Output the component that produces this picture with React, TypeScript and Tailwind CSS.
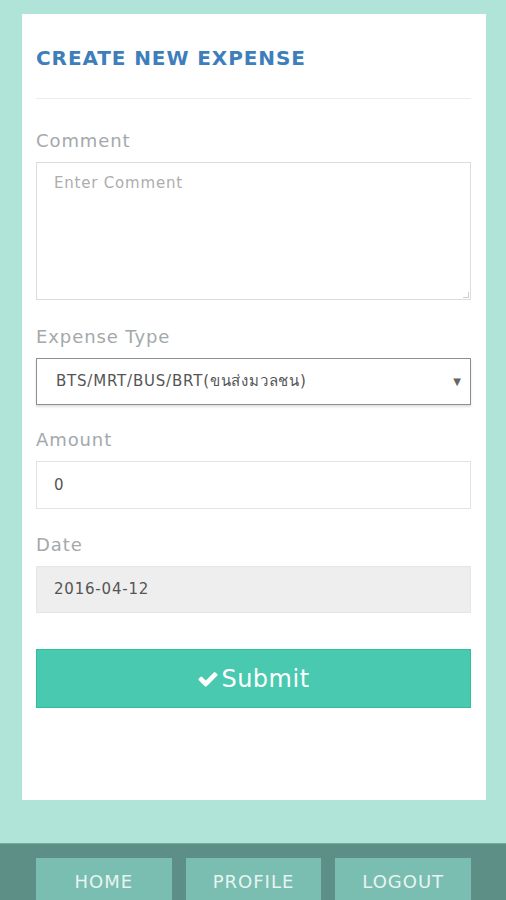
import React from 'react';

const font = { fontFamily: '"DejaVu Sans", "Noto Sans", sans-serif' };

function Label({ children }: { children: React.ReactNode }) {
  return <div className="text-[18px] leading-[24px] text-[#a3a9ab] tracking-[0.9px]">{children}</div>;
}

export default function App() {
  return (
    <div className="h-[900px] overflow-hidden bg-[#b1e4d9] flex flex-col" style={font}>
      {/* Card */}
      <div className="shrink-0 ml-[22px] mr-[20px] mt-[14px] h-[786px] bg-white pl-[14px] pr-[15px] pt-[32px] flex flex-col">
        <h1 className="text-[20px] leading-[24px] font-bold text-[#3d7ebb] tracking-[0.9px]">CREATE NEW EXPENSE</h1>
        <div className="mt-[28px] h-px bg-[#ececec]" />

        <div className="mt-[30px]">
          <Label>Comment</Label>
        </div>
        <div className="mt-[9px] h-[138px] border border-[#dcdcdc] px-[17px] pt-[8px] relative">
          <span className="text-[15px] text-[#adadad] tracking-[0.8px]">Enter Comment</span>
          <span className="absolute right-[1px] bottom-[1px] w-[6px] h-[6px] border-b border-r border-[#cfcfcf]" />
        </div>

        <div className="mt-[25px]">
          <Label>Expense Type</Label>
        </div>
        <div className="mt-[9px] h-[47px] border border-[#8e8e8e] shadow-[0_2px_2px_rgba(0,0,0,0.12)] flex items-center pl-[19px] pr-[9px]">
          <span className="flex-1 text-[15px] text-[#555] tracking-[0.8px]">BTS/MRT/BUS/BRT(ขนส่งมวลชน)</span>
          <span className="text-[10px] text-[#666]">▼</span>
        </div>

        <div className="mt-[23px]">
          <Label>Amount</Label>
        </div>
        <div className="mt-[9px] h-[48px] border border-[#e3e3e3] flex items-center px-[17px]">
          <span className="text-[15px] text-[#555]">0</span>
        </div>

        <div className="mt-[24px]">
          <Label>Date</Label>
        </div>
        <div className="mt-[9px] h-[47px] bg-[#eeeeee] border border-[#e6e6e6] flex items-center px-[17px]">
          <span className="text-[15px] text-[#555] tracking-[0.8px]">2016-04-12</span>
        </div>

        <button className="mt-[36px] h-[59px] bg-[#48c9b0] border border-[#2fbf9f] flex items-center justify-center text-white text-[24px] tracking-[0.5px]">
          <svg viewBox="0 0 1792 1792" className="w-[22px] h-[22px] mr-[2px] fill-white">
            <path d="M1671 566q0 40-28 68l-724 724-136 136q-28 28-68 28t-68-28l-136-136-362-362q-28-28-28-68t28-68l136-136q28-28 68-28t68 28l294 295 656-657q28-28 68-28t68 28l136 136q28 28 28 68z" />
          </svg>
          <span>Submit</span>
        </button>
      </div>

      {/* Bottom nav */}
      <div className="mt-[43px] flex-1 bg-[#5e8f86] border-t border-[#78aaa0] pt-[14px] pl-[36px] pr-[35px] flex gap-[14px]">
        {['HOME', 'PROFILE', 'LOGOUT'].map((item) => (
          <button
            key={item}
            className="flex-1 h-[46px] bg-[#79beb1] text-[#e8f4f1] text-[18px] tracking-[1px] flex items-center justify-center"
          >
            {item}
          </button>
        ))}
      </div>
    </div>
  );
}
